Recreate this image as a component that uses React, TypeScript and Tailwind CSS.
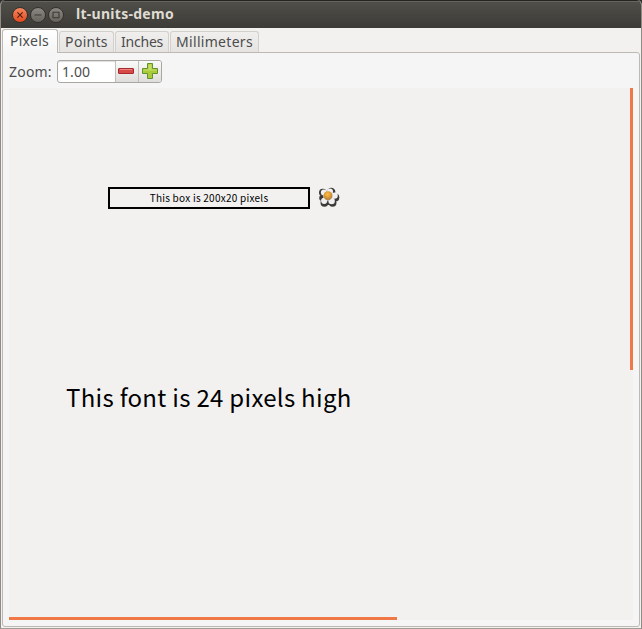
import type { ReactNode } from "react";

function WindowButton({ close = false, children }: { close?: boolean; children: ReactNode }) {
  return (
    <div
      className={
        close
          ? "flex size-4 items-center justify-center rounded-full border border-[#33322e] bg-linear-to-b from-[#f6865c] to-[#e2481b] text-[#4b1d10]"
          : "flex size-4 items-center justify-center rounded-full border border-[#33322e] bg-linear-to-b from-[#8a8881] to-[#66645d] text-[#3a3935]"
      }
    >
      <svg className="size-[14px] shrink-0" viewBox="0 0 14 14" fill="none" stroke="currentColor" strokeWidth="1.1">
        {children}
      </svg>
    </div>
  );
}

function TitleBar() {
  return (
    <header className="flex h-7 items-center border-t border-t-[#252421] bg-linear-to-b from-[#504f49] to-[#3c3b37] pl-[10.5px] shadow-[inset_0_1px_0_#65645e]">
      <div className="flex gap-[2px]">
        <WindowButton close>
          <path d="M4.4 4.4l5.2 5.2M9.6 4.4L4.4 9.6" />
        </WindowButton>
        <WindowButton>
          <path d="M3.5 7h7" />
        </WindowButton>
        <WindowButton>
          <path d="M4 4.2h6v5.6h-6z" />
        </WindowButton>
      </div>
      <h1 className="ml-[12.5px] pb-[2px] text-[14px] leading-5 font-bold tracking-[0.28px] whitespace-nowrap text-[#dfdbd2]">lt-units-demo</h1>
    </header>
  );
}

function Tab({ width, label }: { width: string; label: string }) {
  return (
    <div className={`${width} flex h-[21px] items-center justify-center rounded-t-[3px] border border-b-0 border-[#d3d0cc] bg-linear-to-b from-[#f0efee] to-[#e6e4e2] pb-[2px] whitespace-nowrap`}>
      {label}
    </div>
  );
}

function Flower() {
  return (
    <svg className="h-[22px] w-[24px]" viewBox="0 0 24 22">
      <defs>
        <radialGradient id="yolk" cx="45%" cy="35%">
          <stop offset="0" stopColor="#f7c058" />
          <stop offset="0.65" stopColor="#e59a2a" />
          <stop offset="1" stopColor="#b98a4c" />
        </radialGradient>
        <filter id="soft">
          <feGaussianBlur stdDeviation="0.6" />
        </filter>
      </defs>
      <g fill="#3b3a37" filter="url(#soft)">
        <circle cx="4.8" cy="5.6" r="3.8" />
        <circle cx="13.2" cy="5" r="4.2" />
        <circle cx="17.4" cy="10.4" r="3.9" />
        <circle cx="14.6" cy="15.8" r="3.9" />
        <circle cx="6.4" cy="15.8" r="3.9" />
        <circle cx="4.2" cy="11" r="3" />
        <circle cx="11" cy="11" r="7" />
      </g>
      <g fill="#f0f0f3" filter="url(#soft)">
        <circle cx="5.8" cy="5.4" r="2.9" />
        <circle cx="12" cy="4.4" r="3" />
        <circle cx="16.6" cy="8.6" r="3.2" />
        <circle cx="13.6" cy="14" r="3.2" />
        <circle cx="6.2" cy="13.8" r="3.1" />
        <circle cx="9.8" cy="9" r="4.6" />
      </g>
      <circle cx="10" cy="8.8" r="4.5" fill="url(#yolk)" />
    </svg>
  );
}

export default function App() {
  return (
    <div className="h-[629px] w-[642px] overflow-hidden bg-[#2f2e2b] font-['Noto_Sans','Open_Sans',sans-serif]">
      <div className="flex h-full flex-col overflow-hidden rounded-t-[5px] border-x border-b border-x-[#8f8a84] border-b-[#a09b95] bg-[#f2f1f0]">
        <TitleBar />
        <div className="flex min-h-0 flex-1 flex-col px-px pb-px text-[14px] text-[#4c4c4c]">
          <nav className="relative z-10 -mb-px flex h-[25px] items-end gap-px pt-px">
            <div className="flex h-6 w-[56px] items-center justify-center self-end rounded-t-[3px] border border-b-0 border-[#bdb9b5] bg-linear-to-b from-white to-[#f5f5f5] pr-px pb-[2px] tracking-[0.3px] whitespace-nowrap">
              Pixels
            </div>
            <div className="mb-px flex gap-px">
              <Tab width="w-[55px] tracking-[0.3px]" label="Points" />
              <Tab width="w-[54px] tracking-[-0.2px]" label="Inches" />
              <Tab width="w-[89px] tracking-[0.3px]" label="Millimeters" />
            </div>
          </nav>
          <main className="flex min-h-0 flex-1 flex-col rounded-[3px] rounded-tl-none border border-[#bdb9b5] bg-[#f5f5f5] pt-[7px] pr-[6px] pb-[6px] pl-[6px]">
            <div className="flex h-[23px] items-center">
              <label className="w-12 tracking-[0.2px] whitespace-nowrap">Zoom:</label>
              <div className="flex h-[23px] w-[105px] overflow-hidden rounded-[3px] border border-[#aaa6a1] bg-white shadow-[inset_0_1px_1px_#ddd]">
                <div className="flex w-[57px] items-center pl-[4px] tracking-[0.1px]">1.00</div>
                <div className="flex w-[23px] items-center justify-center border-l border-[#c0bcb8] bg-linear-to-b from-[#fafafa] to-[#dfdddb] pr-[2px] pb-px">
                  <svg className="h-[6px] w-4 shrink-0" viewBox="0 0 16 6">
                    <rect x=".5" y=".5" width="15" height="5" rx=".5" fill="#d94848" stroke="#a52a2e" />
                    <path d="M2 1.5h12" stroke="#ed8585" />
                  </svg>
                </div>
                <div className="flex flex-1 items-center justify-center border-l border-[#c0bcb8] bg-linear-to-b from-[#fafafa] to-[#dfdddb] pr-px pb-[2px]">
                  <svg className="size-4 shrink-0" viewBox="0 0 16 16">
                    <path d="M5.5.5h5v5h5v5h-5v5h-5v-5h-5v-5h5z" fill="#a9cb38" stroke="#649130" />
                    <path d="M6.5 6.5v-5h3v5h5v1h-13v-1z" fill="#c6df68" />
                  </svg>
                </div>
              </div>
            </div>
            <div className="mt-[5px] flex min-h-0 flex-1 flex-col bg-[#f2f1f0] font-['Noto_Sans_CJK_JP',sans-serif] text-black">
              <div className="flex min-h-0 flex-1">
                <div className="flex-1">
                  <div className="flex h-[220px] items-start pt-[99px] pl-[99px]">
                    <div className="flex h-[22px] w-[202px] items-center justify-center border-2 border-black text-[10px] leading-none tracking-[0.25px] whitespace-nowrap">
                      This box is 200x20 pixels
                    </div>
                    <div className="ml-2">
                      <Flower />
                    </div>
                  </div>
                  <p className="pt-[71px] pl-[57px] text-[24px] leading-[36px] tracking-[0.3px] whitespace-nowrap">This font is 24 pixels high</p>
                </div>
                <div className="h-[282px] w-[3px] bg-[#f07746]" />
              </div>
              <div className="h-[3px] w-[388px] bg-[#f07746]" />
            </div>
          </main>
        </div>
      </div>
    </div>
  );
}
